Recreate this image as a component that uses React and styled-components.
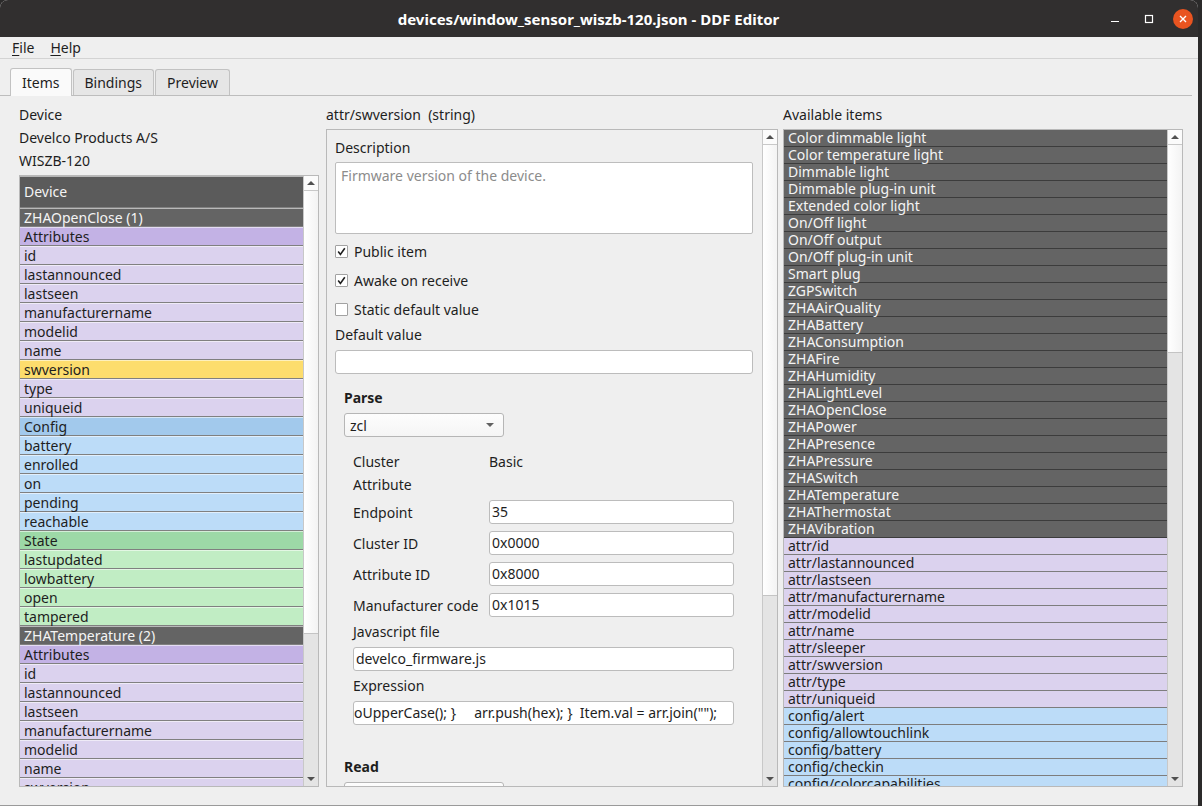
import React from 'react'
import styled, { createGlobalStyle } from 'styled-components'

const GlobalStyle = createGlobalStyle`
  html, body {
    margin: 0;
    padding: 0;
    background: #2b2a2a;
  }
  body {
    font-family: "Noto Sans", "DejaVu Sans", sans-serif;
    font-size: 14px;
    color: #1e1e1e;
  }
`

const Window = styled.div`
  width: 1198px;
  height: 806px;
  display: flex;
  flex-direction: column;
  background: #efefef;
  border-radius: 8px 8px 0 0;
  overflow: hidden;
  box-sizing: border-box;
  border-bottom: 1px solid #9a9a9a;
`

const TitleBar = styled.header`
  flex: none;
  height: 37px;
  display: grid;
  grid-template-columns: 1fr auto 1fr;
  align-items: center;
  padding-right: 5px;
  background: #312f2f;
  color: #ffffff;
  font-weight: bold;
  font-size: 15px;
`

const Title = styled.div`
  grid-column: 2;
  margin-right: 16px;
`

const Controls = styled.div`
  grid-column: 3;
  justify-self: end;
  display: flex;
  align-items: center;
  gap: 14px;
`

const CtrlButton = styled.div`
  width: 20px;
  height: 20px;
  display: flex;
  align-items: center;
  justify-content: center;
  border-radius: 50%;
  background: ${p => (p.$close ? '#e95420' : 'transparent')};
`

const MenuBar = styled.nav`
  flex: none;
  height: 21px;
  display: flex;
  align-items: center;
  gap: 16px;
  padding-left: 12px;
  border-bottom: 1px solid #d3d3d3;
`

const MenuItem = styled.span`
  color: #1e1e1e;
  u { text-decoration-thickness: 1px; text-underline-offset: 2px; }
`

const TabBar = styled.div`
  flex: none;
  margin: 9px 6px 0 0;
  height: 27px;
  display: flex;
  align-items: flex-end;
  padding-left: 10px;
  border-bottom: 1px solid #bdbdbd;
`

const Tab = styled.div`
  box-sizing: border-box;
  height: ${p => (p.$active ? 28 : 26)}px;
  margin-bottom: ${p => (p.$active ? -1 : 0)}px;
  margin-right: 1px;
  padding: 0 11px;
  display: flex;
  align-items: center;
  border: 1px solid #c2c2c2;
  border-bottom: none;
  border-radius: 3px 3px 0 0;
  background: ${p => (p.$active ? '#fafafa' : '#e6e6e6')};
`

const Content = styled.main`
  flex: 1;
  min-height: 0;
  display: flex;
  padding: 7px 15px 18px 19px;
`

const Column = styled.section`
  flex: none;
  width: ${p => p.$width}px;
  margin-right: ${p => p.$gap || 0}px;
  display: flex;
  flex-direction: column;
`

const Caption = styled.div`
  flex: none;
  height: 23px;
  line-height: 23px;
  white-space: pre;
`

const ListBox = styled.div`
  flex: 1;
  min-height: 0;
  margin-top: 3px;
  display: flex;
  border: 1px solid #b9b9b9;
  background: #ffffff;
`

const Rows = styled.div`
  flex: 1;
  min-width: 0;
  overflow: hidden;
`

const rowColors = {
  header: ['#5b5b5b', '#f4f4f4'],
  sensor: ['#646464', '#f4f4f4'],
  attrHead: ['#c3b2e5', '#1e1e1e'],
  attr: ['#dbd2ee', '#1e1e1e'],
  selected: ['#fddd6d', '#1e1e1e'],
  configHead: ['#a2c9ec', '#1e1e1e'],
  config: ['#bcdcf8', '#1e1e1e'],
  stateHead: ['#9dd9a7', '#1e1e1e'],
  state: ['#c1edc4', '#1e1e1e'],
}

const TreeRow = styled.div`
  box-sizing: border-box;
  height: ${p => (p.$kind === 'header' ? 32 : 19)}px;
  line-height: ${p => (p.$kind === 'header' ? 30 : 17)}px;
  padding-left: 4px;
  white-space: nowrap;
  background: ${p => rowColors[p.$kind][0]};
  color: ${p => rowColors[p.$kind][1]};
  border-top: 1px solid rgba(255, 255, 255, 0.55);
  border-bottom: 1px solid #808080;
`

const ItemRow = styled.div`
  box-sizing: border-box;
  height: 17px;
  line-height: 16px;
  padding-left: 4px;
  white-space: nowrap;
  background: ${p => rowColors[p.$kind][0]};
  color: ${p => rowColors[p.$kind][1]};
  border-bottom: 1px solid ${p => (p.$kind === 'sensor' ? '#3c3c3c' : '#7d7d7d')};
`

const ScrollBar = styled.div`
  flex: none;
  width: 14px;
  display: flex;
  flex-direction: column;
  border-left: 1px solid #c8c8c8;
  background: #e4e4e4;
`

const ScrollArrow = styled.div`
  flex: none;
  height: 14px;
  display: flex;
  align-items: center;
  justify-content: center;
  background: ${p => (p.$up ? '#fbfbfb' : 'transparent')};
  border-bottom: ${p => (p.$up ? '1px solid #c8c8c8' : 'none')};
`

const Arrow = styled.span`
  width: 0;
  height: 0;
  border-left: 4px solid transparent;
  border-right: 4px solid transparent;
  ${p => (p.$up ? 'border-bottom: 4px solid #505050;' : 'border-top: 4px solid #505050;')}
`

const Thumb = styled.div`
  flex: none;
  box-sizing: border-box;
  background: linear-gradient(90deg, #ffffff, #f3f3f3);
  border-bottom: 1px solid #c4c4c4;
`

const Track = styled.div`
  flex: 1;
`

const ScrollArea = styled.div`
  flex: 1;
  min-height: 0;
  margin-top: 3px;
  display: flex;
  border: 1px solid #b9b9b9;
  background: #efefef;
`

const Form = styled.div`
  flex: 1;
  min-width: 0;
  overflow: hidden;
  display: flex;
  flex-direction: column;
  padding: 7px 9px 0 8px;
`

const Label = styled.div`
  flex: none;
  height: 22px;
  line-height: 22px;
  margin-top: ${p => p.$mt || 0}px;
  font-weight: ${p => (p.$bold ? 'bold' : 'normal')};
  white-space: nowrap;
`

const TextArea = styled.div`
  flex: none;
  box-sizing: border-box;
  height: 72px;
  margin-top: 3px;
  padding: 3px 5px;
  line-height: 20px;
  background: #ffffff;
  border: 1px solid #bdbdbd;
  border-radius: 2px;
  color: #8c8c8c;
`

const CheckRow = styled.label`
  flex: none;
  height: 22px;
  margin-top: ${p => p.$mt}px;
  display: flex;
  align-items: center;
  gap: 6px;
`

const CheckBox = styled.span`
  box-sizing: border-box;
  width: 13px;
  height: 13px;
  display: flex;
  align-items: center;
  justify-content: center;
  background: #ffffff;
  border: 1px solid #a2a2a2;
  border-radius: 1px;
`

const Input = styled.div`
  flex: none;
  box-sizing: border-box;
  height: 24px;
  margin-top: ${p => p.$mt || 0}px;
  padding: 0 ${p => (p.$flush ? 0 : 2)}px;
  line-height: 21px;
  background: #ffffff;
  border: 1px solid #bcbcbc;
  border-radius: 3px;
  white-space: pre;
  overflow: hidden;
`

const Combo = styled.div`
  flex: none;
  box-sizing: border-box;
  width: 160px;
  height: 24px;
  margin-top: 4px;
  padding: 0 9px 0 5px;
  display: flex;
  align-items: center;
  justify-content: space-between;
  background: linear-gradient(#fdfdfd, #f5f5f5);
  border: 1px solid #b6b6b6;
  border-radius: 3px;
`

const ComboArrow = styled.span`
  width: 0;
  height: 0;
  border-left: 4px solid transparent;
  border-right: 4px solid transparent;
  border-top: 4px solid #626262;
`

const Section = styled.div`
  flex: none;
  display: flex;
  flex-direction: column;
  padding-left: 9px;
`

const Params = styled.div`
  flex: none;
  display: flex;
  flex-direction: column;
  padding: 0 19px 0 9px;
`

const ParamRow = styled.div`
  flex: none;
  display: grid;
  grid-template-columns: 136px 1fr;
  align-items: center;
  height: ${p => p.$h}px;
  margin-top: ${p => p.$mt || 0}px;
  white-space: nowrap;
`

function Scroller({ thumb }) {
  return (
    <ScrollBar>
      <ScrollArrow $up><Arrow $up /></ScrollArrow>
      <Thumb style={{ height: thumb }} />
      <Track />
      <ScrollArrow><Arrow /></ScrollArrow>
    </ScrollBar>
  )
}

const deviceRows = [
  ['ZHAOpenClose (1)', 'sensor'],
  ['Attributes', 'attrHead'],
  ['id', 'attr'], ['lastannounced', 'attr'], ['lastseen', 'attr'],
  ['manufacturername', 'attr'], ['modelid', 'attr'], ['name', 'attr'],
  ['swversion', 'selected'],
  ['type', 'attr'], ['uniqueid', 'attr'],
  ['Config', 'configHead'],
  ['battery', 'config'], ['enrolled', 'config'], ['on', 'config'],
  ['pending', 'config'], ['reachable', 'config'],
  ['State', 'stateHead'],
  ['lastupdated', 'state'], ['lowbattery', 'state'], ['open', 'state'], ['tampered', 'state'],
  ['ZHATemperature (2)', 'sensor'],
  ['Attributes', 'attrHead'],
  ['id', 'attr'], ['lastannounced', 'attr'], ['lastseen', 'attr'],
  ['manufacturername', 'attr'], ['modelid', 'attr'], ['name', 'attr'], ['swversion', 'attr'],
]

const deviceTypes = [
  'Color dimmable light', 'Color temperature light', 'Dimmable light', 'Dimmable plug-in unit',
  'Extended color light', 'On/Off light', 'On/Off output', 'On/Off plug-in unit', 'Smart plug',
  'ZGPSwitch', 'ZHAAirQuality', 'ZHABattery', 'ZHAConsumption', 'ZHAFire', 'ZHAHumidity',
  'ZHALightLevel', 'ZHAOpenClose', 'ZHAPower', 'ZHAPresence', 'ZHAPressure', 'ZHASwitch',
  'ZHATemperature', 'ZHAThermostat', 'ZHAVibration',
]

const attrItems = [
  'attr/id', 'attr/lastannounced', 'attr/lastseen', 'attr/manufacturername', 'attr/modelid',
  'attr/name', 'attr/sleeper', 'attr/swversion', 'attr/type', 'attr/uniqueid',
]

const configItems = [
  'config/alert', 'config/allowtouchlink', 'config/battery', 'config/checkin', 'config/colorcapabilities',
]

const Check = () => (
  <svg width="9" height="9" viewBox="0 0 9 9">
    <path d="M1.2 4.6 L3.4 7.4 L7.8 1.2" fill="none" stroke="#1e1e1e" strokeWidth="1.6" />
  </svg>
)

export default function App() {
  return (
    <Window>
      <GlobalStyle />
      <TitleBar>
        <Title>devices/window_sensor_wiszb-120.json - DDF Editor</Title>
        <Controls>
          <CtrlButton>
            <svg width="10" height="10" viewBox="0 0 10 10"><path d="M1 7.5 H9" stroke="#fff" strokeWidth="1.2" /></svg>
          </CtrlButton>
          <CtrlButton>
            <svg width="10" height="10" viewBox="0 0 10 10"><rect x="1.5" y="1.5" width="7" height="7" fill="none" stroke="#fff" strokeWidth="1.2" /></svg>
          </CtrlButton>
          <CtrlButton $close>
            <svg width="10" height="10" viewBox="0 0 10 10"><path d="M2 2 L8 8 M8 2 L2 8" stroke="#fff" strokeWidth="1.4" /></svg>
          </CtrlButton>
        </Controls>
      </TitleBar>

      <MenuBar>
        <MenuItem><u>F</u>ile</MenuItem>
        <MenuItem><u>H</u>elp</MenuItem>
      </MenuBar>

      <TabBar>
        <Tab $active>Items</Tab>
        <Tab>Bindings</Tab>
        <Tab>Preview</Tab>
      </TabBar>

      <Content>
        <Column $width={300} $gap={7}>
          <Caption>Device</Caption>
          <Caption>Develco Products A/S</Caption>
          <Caption>WISZB-120</Caption>
          <ListBox>
            <Rows>
              <TreeRow $kind="header">Device</TreeRow>
              {deviceRows.map(([text, kind], i) => (
                <TreeRow key={i} $kind={kind}>{text}</TreeRow>
              ))}
            </Rows>
            <Scroller thumb={443} />
          </ListBox>
        </Column>

        <Column $width={452} $gap={5}>
          <Caption>attr/swversion  (string)</Caption>
          <ScrollArea>
            <Form>
              <Label>Description</Label>
              <TextArea>Firmware version of the device.</TextArea>
              <CheckRow $mt={6}><CheckBox><Check /></CheckBox>Public item</CheckRow>
              <CheckRow $mt={7}><CheckBox><Check /></CheckBox>Awake on receive</CheckRow>
              <CheckRow $mt={7}><CheckBox />Static default value</CheckRow>
              <Label $mt={4}>Default value</Label>
              <Input $mt={4} />
              <Section>
                <Label $mt={13} $bold>Parse</Label>
                <Combo>zcl<ComboArrow /></Combo>
                <Params>
                  <ParamRow $h={23} $mt={13}><span>Cluster</span><span>Basic</span></ParamRow>
                  <ParamRow $h={23}><span>Attribute</span></ParamRow>
                  <ParamRow $h={24} $mt={4}><span>Endpoint</span><Input>35</Input></ParamRow>
                  <ParamRow $h={24} $mt={7}><span>Cluster ID</span><Input>0x0000</Input></ParamRow>
                  <ParamRow $h={24} $mt={7}><span>Attribute ID</span><Input>0x8000</Input></ParamRow>
                  <ParamRow $h={24} $mt={7}><span>Manufacturer code</span><Input>0x1015</Input></ParamRow>
                  <Label $mt={4}>Javascript file</Label>
                  <Input $mt={4}>develco_firmware.js</Input>
                  <Label $mt={4}>Expression</Label>
                  <Input $mt={4} $flush>{'oUpperCase(); }     arr.push(hex); }  Item.val = arr.join("");'}</Input>
                </Params>
                <Label $mt={31} $bold>Read</Label>
                <Combo />
              </Section>
            </Form>
            <Scroller thumb={451} />
          </ScrollArea>
        </Column>

        <Column $width={400}>
          <Caption>Available items</Caption>
          <ListBox>
            <Rows>
              {deviceTypes.map(t => <ItemRow key={t} $kind="sensor">{t}</ItemRow>)}
              {attrItems.map(t => <ItemRow key={t} $kind="attr">{t}</ItemRow>)}
              {configItems.map(t => <ItemRow key={t} $kind="config">{t}</ItemRow>)}
            </Rows>
            <Scroller thumb={208} />
          </ListBox>
        </Column>
      </Content>
    </Window>
  )
}
